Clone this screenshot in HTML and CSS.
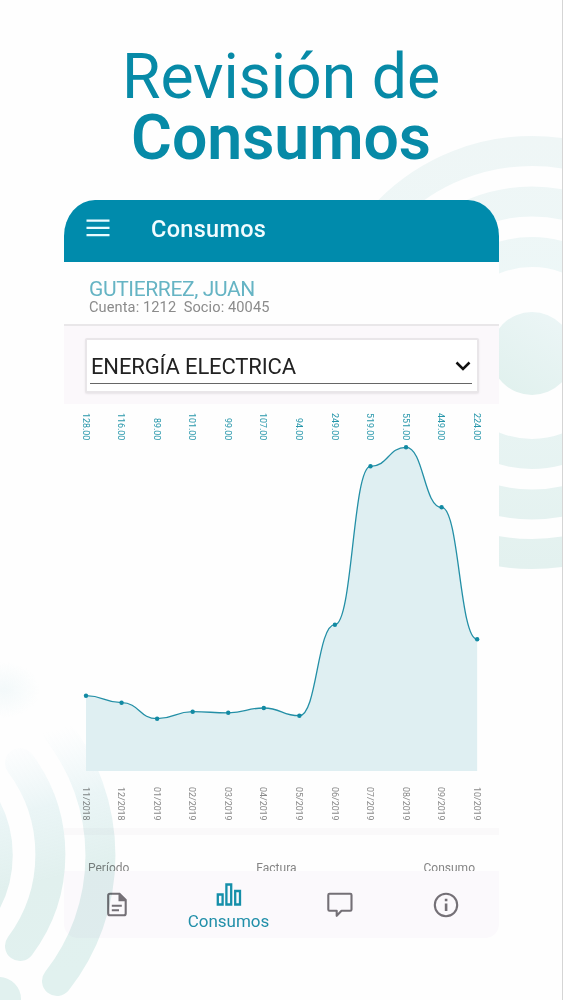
FILE: index.html
```html
<!DOCTYPE html>
<html lang="es">
<head>
<meta charset="utf-8">
<title>Revisión de Consumos</title>
<link rel="stylesheet" href="styles.css">
</head>
<body>
<div class="page">
  <svg class="decor" viewBox="0 0 563 1000">
    <defs>
      <linearGradient id="rings" gradientUnits="userSpaceOnUse" x1="0" y1="135" x2="0" y2="568"><stop offset="0" stop-color="#eff6f6"/><stop offset=".35" stop-color="#edf7f7"/><stop offset="1" stop-color="#e3f1ef"/></linearGradient>
      <linearGradient id="dot" x1="1" y1="0" x2=".3" y2="1"><stop offset="0" stop-color="#edf6f7"/><stop offset="1" stop-color="#e1f1ee"/></linearGradient>
    </defs>
    <g fill="none" stroke="url(#rings)" stroke-width="30">
      <circle cx="532" cy="353" r="101"/><circle cx="532" cy="353" r="151.5"/><circle cx="532" cy="352.500" r="201.500"/>
    </g>
    <circle cx="532" cy="353.500" r="41.500" fill="url(#dot)"/>
  </svg>
  <h1 class="title"><span class="title-light">Revisión de</span><span class="title-bold">Consumos</span></h1>
  <main class="phone">
    <header class="bar">
      <svg class="menu" viewBox="0 0 24 18"><path d="M.5 1.700h23M.5 8.900h23M.5 16.100h23" stroke="#e9fbff" stroke-width="2.200"/></svg>
      <span class="bar-title">Consumos</span>
    </header>
    <section class="account">
      <div class="name">GUTIERREZ, JUAN</div>
      <div class="meta">Cuenta: 1212&nbsp; Socio: 40045</div>
    </section>
    <section class="filter">
      <div class="select"><div class="select-line"><span class="select-text">ENERGÍA ELECTRICA</span>
        <svg class="chevron" viewBox="0 0 16 10"><path d="M1.500 1.500L8 8l6.500-6.500" fill="none" stroke="#111" stroke-width="2.500"/></svg></div></div>
    </section>
    <section class="chart">
      <div class="labels values"><span>128.00</span><span>116.00</span><span>89.00</span><span>101.00</span><span>99.00</span><span>107.00</span><span>94.00</span><span>249.00</span><span>519.00</span><span>551.00</span><span>449.00</span><span>224.00</span></div>
      <svg class="plot" viewBox="64 441 435 341">
        <path id="area" fill="#dfeff2"/>
        <path id="line" fill="none" stroke="#238fa6" stroke-width="1.300"/>
        <g id="points" fill="#128aa3"></g>
      </svg>
      <div class="labels dates"><span>11/2018</span><span>12/2018</span><span>01/2019</span><span>02/2019</span><span>03/2019</span><span>04/2019</span><span>05/2019</span><span>06/2019</span><span>07/2019</span><span>08/2019</span><span>09/2019</span><span>10/2019</span></div>
    </section>
    <section class="table-head"><span>Período</span><span>Factura</span><span>Consumo</span></section>
    <nav class="nav">
      <div class="tab"><svg class="doc" viewBox="0 0 20 24"><path d="M3 1.200h9.500l6.200 6.300V21q0 1.800-1.800 1.800H3Q1.200 22.800 1.200 21V3Q1.200 1.200 3 1.200z" fill="none" stroke="#747076" stroke-width="2.100"/><path d="M11.500 1.200l7.500 7.500h-7.500zM4.800 12.200h10v2h-10zM4.800 16.700h7.200v2H4.800z" fill="#747076"/></svg></div>
      <div class="tab active"><svg class="bars" viewBox="0 0 26 23"><path d="M1.800 11.500h4.800v10H1.800zM10.400 1.500h4.800v20h-4.800zM19.200 8h4.800v13.500h-4.800z" fill="none" stroke="#158fa9" stroke-width="2.300"/></svg><span>Consumos</span></div>
      <div class="tab"><svg class="chat" viewBox="0 0 26 26"><path d="M2.500 1.800h20.800q1.200 0 1.200 1.200v14.500q0 1.200-1.200 1.200H14.500L9.700 23.800V18.700H2.500q-1.200 0-1.200-1.200V3q0-1.200 1.200-1.200z" fill="none" stroke="#747076" stroke-width="2.100" stroke-linejoin="round"/></svg></div>
      <div class="tab"><svg class="info" viewBox="0 0 26 26"><circle cx="13" cy="13" r="11.200" fill="none" stroke="#747076" stroke-width="2.100"/><path d="M11.800 6.800h2.600v2.400h-2.600zM11.800 11.500h2.600v7.500h-2.600z" fill="#747076"/></svg></div>
    </nav>
  </main>
  <svg class="decor waves" viewBox="0 0 563 1000">
    <defs>
      <linearGradient id="fade" gradientUnits="userSpaceOnUse" x1="-60" y1="760" x2="0" y2="990"><stop offset="0" stop-color="#eef7fa" stop-opacity="0"/><stop offset=".3" stop-color="#e9f5f6" stop-opacity=".9"/><stop offset=".6" stop-color="#e2f1ef"/><stop offset="1" stop-color="#e2f2f0"/></linearGradient>
      <radialGradient id="haze"><stop offset="0" stop-color="#f4fafb"/><stop offset="1" stop-color="#f4fafb" stop-opacity="0"/></radialGradient>
      <clipPath id="below-area"><path d="M0 640H86V771H563V1000H0z"/></clipPath>
    </defs>
    <ellipse cx="4" cy="690" rx="36" ry="28" fill="url(#haze)"/>
    <g fill="none" stroke="url(#fade)" stroke-width="30" stroke-linecap="round" clip-path="url(#below-area)">
      <path d="M57 981A203 203 0 0 0 57 730"/><path d="M20 946A153 153 0 0 0 20 763"/><path d="M-22 915A101 101 0 0 0 -22 795"/>
    </g>
    <circle cx="-1" cy="999" r="22" fill="#e2f2f0"/>
  </svg>
</div>
<script src="chart.js"></script>
</body>
</html>
```
FILE: styles.css
```css
* { box-sizing: border-box; }
body { margin: 0; background: #fefefe; font-family: Roboto, sans-serif; }
.page { position: relative; width: 563px; height: 1000px; overflow: hidden; border-right: 1px solid #d5d5d5; }
.decor { position: absolute; left: 0; top: 0; width: 563px; height: 1000px; }
.waves { mix-blend-mode: multiply; pointer-events: none; }
.title { position: relative; margin: 0; padding-top: 46px; height: 200px; color: #078aa7; font-size: 62.5px; line-height: 61px; text-align: center; display: flex; flex-direction: column; align-items: center; }
.title-light { font-weight: 400; }
.title-bold { font-weight: 600; }
.phone { position: relative; width: 435px; height: 738px; margin-left: 64px; background: #fefefe; border-radius: 31px 31px 0 0 / 36px 36px 0 0; overflow: hidden; }
.bar { height: 62px; padding: 0 22px; display: flex; align-items: center; background: #008bac; color: #f1fcff; }
.menu { width: 24px; height: 18px; margin-top: -7px; }
.bar-title { margin: -4px 0 0 41px; font-size: 23.5px; letter-spacing: .3px; font-weight: 500; }
.account { height: 64px; padding: 15px 25px 0; border-bottom: 2px solid #e9e7e9; }
.name { font-size: 21px; letter-spacing: -.37px; line-height: 24px; color: #66b4c4; white-space: nowrap; }
.meta { font-size: 14.6px; letter-spacing: .1px; line-height: 13px; color: #8b8b8b; }
.filter { height: 78px; padding: 12px 21px; background: #fbf8fb; }
.select { width: 394px; height: 55px; padding: 6px 5px 0; background: #fff; border: 2px solid #e9e6e9; border-radius: 2px; box-shadow: 0 1px 2px #e8e4e8; }
.select-line { height: 38px; margin-left: -2px; display: flex; align-items: center; justify-content: space-between; border-bottom: 1px solid #666; }
.select-text { font-size: 22px; letter-spacing: -.15px; color: #222; margin: 3px 0 0 1px; }
.chevron { width: 16px; height: 10px; margin: 2px 1px 0 0; }
.chart { height: 431px; padding-top: 9px; border-bottom: 7px solid #faf9fa; }
.labels { display: flex; margin-left: 3.2px; width: 426.6px; }
.labels span { flex: 1; display: flex; align-items: center; writing-mode: vertical-rl; line-height: 35.55px; font-size: 8.9px; }
.values { height: 28px; margin-top: -1px; margin-bottom: 1px; }
.values span { color: #2696aa; justify-content: flex-end; }
.plot { display: block; width: 435px; height: 341px; }
.dates { height: 46px; padding-top: 5px; color: #888; }
.table-head { height: 36px; padding: 26px 24px 0; display: flex; justify-content: space-between; overflow: hidden; font-size: 12px; line-height: 14px; color: #858585; }
.nav { height: 67px; background: #fbf9fc; display: grid; grid-template-columns: 107px 115px 107px 106px; border-radius: 0 0 14px 14px; }
.tab { display: flex; flex-direction: column; align-items: center; padding-top: 21px; }
.doc { width: 20px; height: 25px; margin-left: -1px; }
.active { padding-top: 12px; color: #218fa9; font-size: 17px; }
.active span { line-height: 20px; margin-top: 5px; }
.bars { width: 26px; height: 23px; }
.chat, .info { width: 26px; height: 26px; }
```
FILE: chart.js
```js
const ys = [695.7, 702.7, 718.7, 711.7, 712.8, 708, 715.7, 624.7, 466.3, 447.3, 507.3, 639.3];
const pts = ys.map((y, i) => [86 + i * 35.56, y]);
let d = `M${pts[0]}`;
for (let i = 1; i < pts.length; i++) {
  const [x0, y0] = pts[i - 1];
  const [x1, y1] = pts[i];
  const mid = (x0 + x1) / 2;
  d += `C${mid},${y0} ${mid},${y1} ${x1},${y1}`;
}
document.getElementById('line').setAttribute('d', d);
document.getElementById('area').setAttribute('d', `${d}V771H86Z`);
document.getElementById('points').innerHTML = pts.map(([x, y]) => `<circle cx="${x}" cy="${y}" r="2.200"/>`).join('');
```
